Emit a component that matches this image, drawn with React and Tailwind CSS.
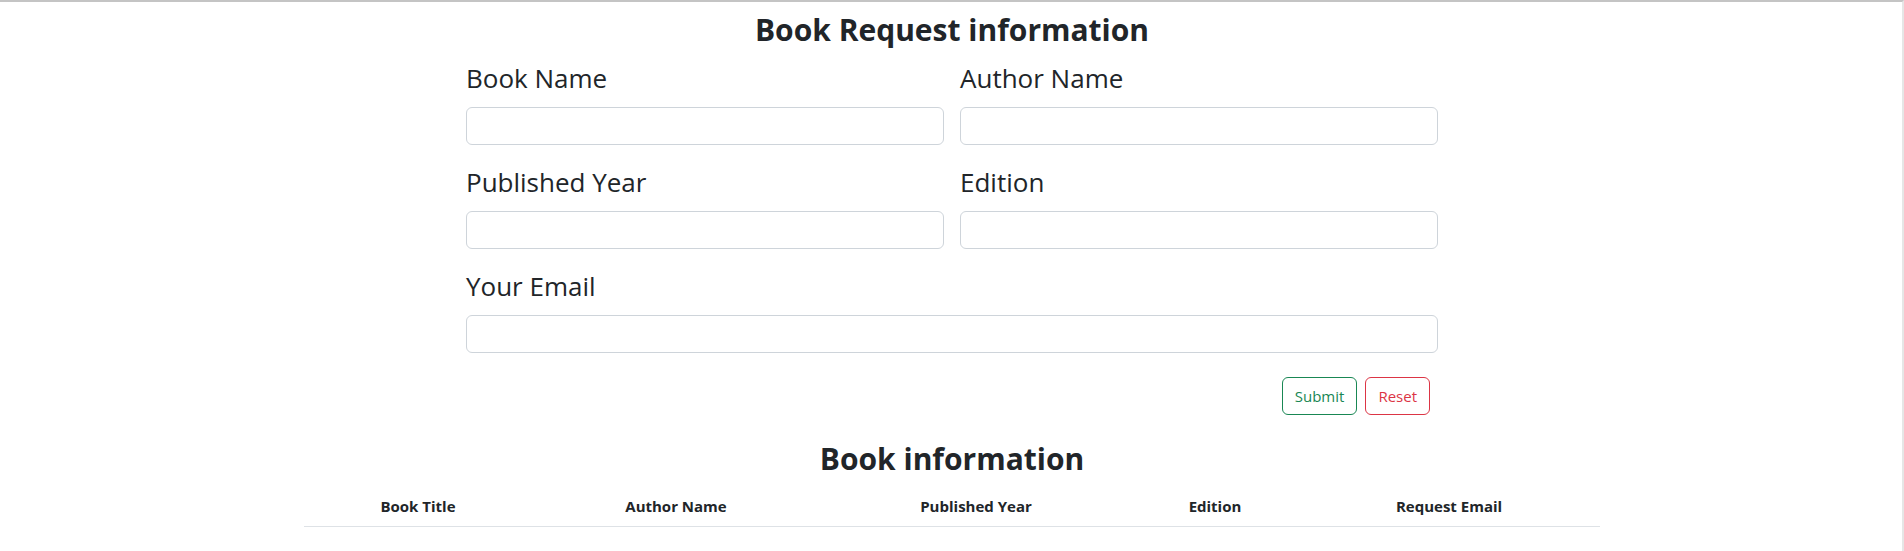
import React from "react";

const fields = [
  ["Book Name", "Author Name"],
  ["Published Year", "Edition"],
];

const columns = [
  { label: "Book Title", w: "w-[228px]" },
  { label: "Author Name", w: "w-[288px]" },
  { label: "Published Year", w: "w-[312px]" },
  { label: "Edition", w: "w-[166px]" },
  { label: "Request Email", w: "w-[302px]" },
];

function Field({ label, type = "text" }) {
  return (
    <div className="mb-4">
      <label className="block mb-2 text-[26px] leading-[42px]">{label}</label>
      <input
        type={type}
        className="block w-full h-[38px] px-3 rounded-[6px] border border-[#ced4da] bg-white text-base outline-none"
      />
    </div>
  );
}

export default function App() {
  return (
    <div className="min-h-[551px] pl-[2px] bg-white border-t-2 border-t-[#c4c4c4] border-r-2 border-r-[#e6e6e6] font-['Open_Sans',sans-serif] text-[#212529]">
      {/* Request form */}
      <h2 className="pt-[9px] mb-2 text-center text-[30px] leading-[38px] font-bold">
        Book Request information
      </h2>

      <form className="w-[972px] mx-auto">
        {fields.map((row) => (
          <div key={row[0]} className="grid grid-cols-2 gap-x-4">
            {row.map((f) => (
              <Field key={f} label={f} />
            ))}
          </div>
        ))}

        <Field label="Your Email" type="email" />

        <div className="flex justify-end gap-2 pt-2 pr-2">
          <button
            type="button"
            className="h-[38px] px-3 rounded-[6px] border border-[#198754] text-[#198754] text-[15px] leading-6"
          >
            Submit
          </button>
          <button
            type="reset"
            className="h-[38px] px-3 rounded-[6px] border border-[#dc3545] text-[#dc3545] text-[15px] leading-6"
          >
            Reset
          </button>
        </div>
      </form>

      {/* Book list */}
      <h2 className="mt-[25px] mb-2 text-center text-[30px] leading-[38px] font-bold">
        Book information
      </h2>

      <div className="w-[1296px] mx-auto">
        <table className="w-full table-fixed border-collapse">
          <thead>
            <tr>
              {columns.map((c) => (
                <th
                  key={c.label}
                  className={`${c.w} px-2 py-2 text-center text-[15px] leading-6 font-bold border-b border-[#dee2e6]`}
                >
                  {c.label}
                </th>
              ))}
            </tr>
          </thead>
          <tbody></tbody>
        </table>
      </div>
    </div>
  );
}
